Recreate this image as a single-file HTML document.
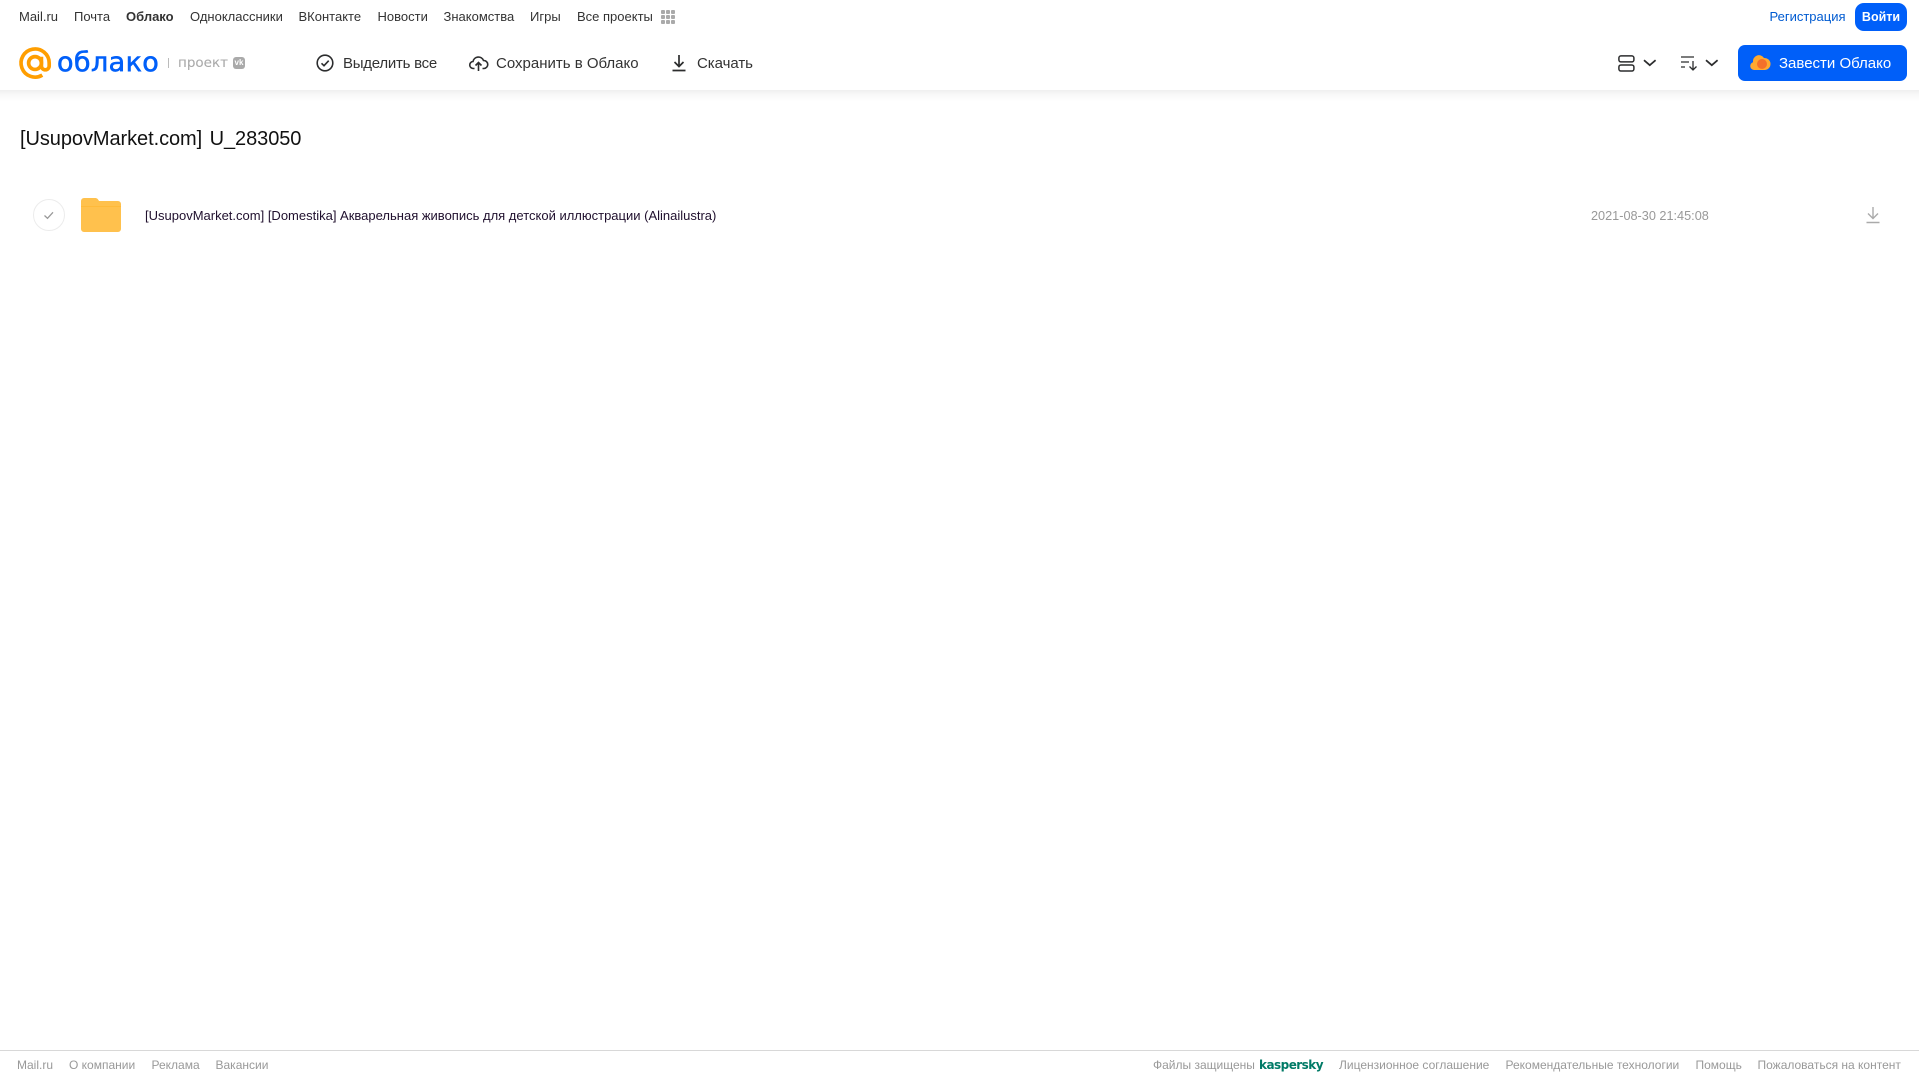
<!DOCTYPE html>
<html lang="ru"><head><meta charset="utf-8"><title>Облако</title>
<style>
html,body{margin:0;padding:0;background:#fff;width:1919px;height:1079px;overflow:hidden;font-family:"Liberation Sans",Arial,sans-serif}
.a{position:absolute;white-space:nowrap;line-height:16px}
.n{top:9px;font-size:13px;color:#333}
.t{top:56px;font-size:15px;color:#333}
.f{top:1057px;font-size:12px;color:#999}
svg{position:absolute;overflow:visible}
</style></head><body>
<div style="position:absolute;left:0;top:0;width:1919px;height:90px;background:#fff;z-index:1"></div>
<div style="position:absolute;left:0;top:90px;width:1919px;height:12px;background:linear-gradient(#efefef,#f8f8f8 35%,#fff)"></div>
<div style="position:relative;z-index:2">
<span class="a n" style="left:19px">Mail.ru</span>
<span class="a n" style="left:74px">Почта</span>
<span class="a n" style="left:126px;font-weight:bold">Облако</span>
<span class="a n" style="left:190px">Одноклассники</span>
<span class="a n" style="left:298.500px">ВКонтакте</span>
<span class="a n" style="left:377.500px">Новости</span>
<span class="a n" style="left:443.500px">Знакомства</span>
<span class="a n" style="left:530px">Игры</span>
<span class="a n" style="left:577px">Все проекты</span>
<svg style="left:661px;top:10px" width="15" height="15" fill="#aaa"><rect width="4" height="4" rx="1"/><rect x="5" width="4" height="4" rx="1"/><rect x="10" width="4" height="4" rx="1"/><rect y="5" width="4" height="4" rx="1"/><rect x="5" y="5" width="4" height="4" rx="1"/><rect x="10" y="5" width="4" height="4" rx="1"/><rect y="10" width="4" height="4" rx="1"/><rect x="5" y="10" width="4" height="4" rx="1"/><rect x="10" y="10" width="4" height="4" rx="1"/></svg>
<span class="a n" style="left:1769.500px;color:#005bd1">Регистрация</span>
<div class="a" style="left:1855px;top:3px;width:52px;height:28px;border-radius:9px;background:#005ff9;color:#fff;font-size:12.500px;font-weight:bold;line-height:28px;text-align:center">Войти</div>
<svg style="left:18.500px;top:46.500px" width="33" height="33" viewBox="0 0 34 34" fill="none" stroke="#ff9e00" stroke-width="3.800"><circle cx="16.500" cy="16.500" r="6.600"/><path d="M23.100 10v9.500a4 4 0 0 0 8 0V16.500A14.500 14.500 0 1 0 24 29"/></svg>
<span class="a" style="left:57px;top:46px;font:27px/34px 'DejaVu Sans',sans-serif;color:#005ff9;-webkit-text-stroke:.6px #005ff9;letter-spacing:.4px">облако</span>
<div class="a" style="left:168px;top:58px;width:1px;height:10px;background:#bbb"></div>
<span class="a" style="left:178px;top:55px;font:13.500px/16px 'DejaVu Sans',sans-serif;color:#aaa;-webkit-text-stroke:.1px #aaa">проект</span>
<div class="a" style="left:233px;top:57px;width:12px;height:12px;border-radius:3px;background:#aaa;color:#fff;font-size:8px;font-weight:bold;line-height:12px;text-align:center">vk</div>
<svg style="left:316px;top:54px" width="18" height="18" fill="none" stroke="#2c2d2e" stroke-width="1.600"><circle cx="9" cy="9" r="7.800"/><path d="M5.500 9.300l2.500 2.400 4.700-5"/></svg>
<span class="a t" style="left:343px;letter-spacing:-.25px">Выделить все</span>
<svg style="left:469px;top:54px" width="19" height="18" fill="none" stroke="#2c2d2e" stroke-width="1.600"><path d="M5.500 14.500H4.500a3.500 3.500 0 0 1-.5-7A5.500 5.500 0 0 1 14.500 6.500a4 4 0 0 1 .5 8H13.500"/><path d="M9.500 17V9M6.500 11.500l3-3 3 3"/></svg>
<span class="a t" style="left:496px">Сохранить в Облако</span>
<svg style="left:671px;top:54px" width="16" height="18" fill="none" stroke="#2c2d2e" stroke-width="1.700"><path d="M8 1v11M3.500 8l4.500 4.500L12.500 8M1.500 16.500h13"/></svg>
<span class="a t" style="left:697px;letter-spacing:-.05px">Скачать</span>
<svg style="left:1618px;top:55px" width="17" height="17" fill="none" stroke="#2c2d2e" stroke-width="1.500"><rect x=".9" y=".9" width="15" height="6" rx="2"/><rect x=".9" y="10" width="15" height="6" rx="2"/></svg>
<svg style="left:1643px;top:59px" width="14" height="8" fill="none" stroke="#2c2d2e" stroke-width="1.700"><path d="M1 1.200l5.800 5 5.800-5"/></svg>
<svg style="left:1681px;top:56px" width="17" height="15" fill="none" stroke="#2c2d2e" stroke-width="1.300"><path d="M0 1h13M0 6h8M0 11h4M12 5v9M8.500 10.500l3.500 3.500 3.500-3.500"/></svg>
<svg style="left:1705px;top:59px" width="14" height="8" fill="none" stroke="#2c2d2e" stroke-width="1.700"><path d="M1 1.200l5.800 5 5.800-5"/></svg>
<div class="a" style="left:1738px;top:45px;width:169px;height:36px;border-radius:7px;background:#005ff9"></div>
<svg style="left:1750px;top:54px" width="20" height="17"><path d="M4 16a4 4 0 0 1-1-7.800A6 6 0 0 1 14 4a5 5 0 0 1 1 12z" fill="#ffa930"/><circle cx="12" cy="10" r="5" fill="#f4702a"/></svg>
<span class="a t" style="left:1779px;color:#fff">Завести Облако</span>
<span class="a" style="left:20px;top:126px;font-size:20px;line-height:26px;color:#111;letter-spacing:-.07px;word-spacing:2px">[UsupovMarket.com] U_283050</span>
<svg style="left:33px;top:199px" width="32" height="32" fill="none"><circle cx="16" cy="16" r="15.500" stroke="#ececec"/><path d="M11.500 16.500l3 2.800 5.500-6" stroke="#999" stroke-width="1.300"/></svg>
<svg style="left:81px;top:198px" width="40" height="34"><path d="M0 3a3 3 0 0 1 3-3h11c2 0 3 1 4 3h19a3 3 0 0 1 3 3v25a3 3 0 0 1-3 3H3a3 3 0 0 1-3-3z" fill="#ffc14d"/><rect y="8" width="40" height="1" fill="#ffb52e" opacity=".6"/></svg>
<span class="a" style="left:145px;top:208px;font-size:13px;color:#20102e">[UsupovMarket.com] [Domestika] Акварельная живопись для детской иллюстрации (Alinailustra)</span>
<span class="a" style="left:1591px;top:208px;font-size:12.700px;color:#999">2021-08-30 21:45:08</span>
<svg style="left:1866px;top:206px" width="14" height="18" fill="none" stroke="#aaa" stroke-width="1.400"><path d="M7 1v11M2 7.500l5 5 5-5M.5 16.500h13"/></svg>
<div class="a" style="left:0;top:1050px;width:1919px;height:1px;background:#d8d8d8"></div>
<span class="a f" style="left:17px">Mail.ru</span>
<span class="a f" style="left:69px">О компании</span>
<span class="a f" style="left:151.500px">Реклама</span>
<span class="a f" style="left:215.500px">Вакансии</span>
<span class="a f" style="left:1153px">Файлы защищены</span>
<span class="a f" style="left:1259px;top:1057px;font:bold 12px/16px 'DejaVu Sans',sans-serif;color:#007a66;letter-spacing:-.53px">kaspersky</span>
<span class="a f" style="left:1339px">Лицензионное соглашение</span>
<span class="a f" style="left:1505.500px">Рекомендательные технологии</span>
<span class="a f" style="left:1695.500px">Помощь</span>
<span class="a f" style="left:1757.500px">Пожаловаться на контент</span>
</div>
</body></html>
